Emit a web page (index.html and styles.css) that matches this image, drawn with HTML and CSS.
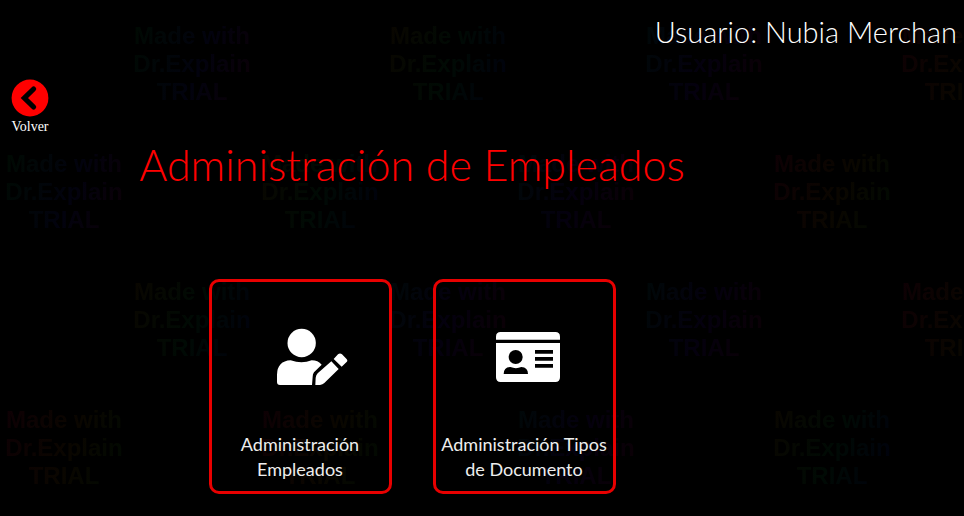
FILE: index.html
```html
<!DOCTYPE html>
<html lang="es">
<head>
<meta charset="utf-8">
<meta name="viewport" content="width=device-width, initial-scale=1">
<title>Administración de Empleados</title>
<link rel="stylesheet" href="styles.css">
</head>
<body>
<div class="marks" aria-hidden="true">
  <div class="marks-row marks-row-shifted">
    <p class="mark green">Made with<br>Dr.Explain<br>TRIAL</p>
    <p class="mark olive">Made with<br>Dr.Explain<br>TRIAL</p>
    <p class="mark teal">Made with<br>Dr.Explain<br>TRIAL</p>
    <p class="mark red">Made with<br>Dr.Explain<br>TRIAL</p>
  </div>
  <div class="marks-row">
    <p class="mark green">Made with<br>Dr.Explain<br>TRIAL</p>
    <p class="mark olive">Made with<br>Dr.Explain<br>TRIAL</p>
    <p class="mark teal">Made with<br>Dr.Explain<br>TRIAL</p>
    <p class="mark red">Made with<br>Dr.Explain<br>TRIAL</p>
  </div>
  <div class="marks-row marks-row-shifted">
    <p class="mark olive">Made with<br>Dr.Explain<br>TRIAL</p>
    <p class="mark teal">Made with<br>Dr.Explain<br>TRIAL</p>
    <p class="mark teal">Made with<br>Dr.Explain<br>TRIAL</p>
    <p class="mark red">Made with<br>Dr.Explain<br>TRIAL</p>
  </div>
  <div class="marks-row">
    <p class="mark red">Made with<br>Dr.Explain<br>TRIAL</p>
    <p class="mark red">Made with<br>Dr.Explain<br>TRIAL</p>
    <p class="mark teal">Made with<br>Dr.Explain<br>TRIAL</p>
    <p class="mark olive">Made with<br>Dr.Explain<br>TRIAL</p>
  </div>
</div>
<div class="page">
  <header class="user">Usuario: Nubia Merchan</header>
  <nav class="nav">
    <a class="back" href="#">
      <svg class="back-icon" viewBox="0 0 38 38" aria-hidden="true">
        <circle cx="19" cy="19" r="18.4" fill="#ff0000"/>
        <path d="M22.6 10 13.4 19l9.2 9" fill="none" stroke="#000" stroke-width="5.2" stroke-linecap="round" stroke-linejoin="miter"/>
      </svg>
      <span>Volver</span>
    </a>
  </nav>
  <main class="main">
    <h1 class="title">Administración de Empleados</h1>
    <div class="cards">
      <a class="card" href="#">
        <svg class="icon icon-user" viewBox="20 24 216 174" fill="#fff" aria-hidden="true">
          <circle cx="97" cy="69" r="42.5"/>
          <path d="M23 186v-22q1-41 41-43 33 12 63 0 19 0 30 13l-23 23q-4 5-4 13l-2 25H32q-9 0-9-9z"/>
          <path d="M138 195l1-22q1-8 6-13l41-36 22 23-43 42q-5 5-13 6z"/>
          <path d="M193 117l13-14q6-5 12 0l13 13q6 6 0 11l-14 13z"/>
        </svg>
        <span class="label">Administración Empleados</span>
      </a>
      <a class="card" href="#">
        <svg class="icon icon-id" viewBox="33 36 192 150" aria-hidden="true">
          <path d="M33 59V50q0-14 14-14h164q14 0 14 14v9zM33 69h192v103q0 14-14 14H47q-14 0-14-14z" fill="#fff"/>
          <circle cx="92" cy="111" r="21"/>
          <path d="M56 162q0-20 20-21 17 7 33 0 20 1 20 21zM150 90h54v11h-54zM150 111h54v11h-54zM150 132h54v11h-54z"/>
        </svg>
        <span class="label">Administración Tipos de Documento</span>
      </a>
    </div>
  </main>
</div>
</body>
</html>
```
FILE: styles.css
```css
* {
  box-sizing: border-box;
}

body {
  margin: 0;
  background: #000;
  color: #fff;
  font-family: "Century Gothic", Lato, sans-serif;
}

a {
  color: inherit;
  text-decoration: none;
}

.page {
  position: relative;
  padding: 11px 7px 22px;
}

/* Watermark layer behind the page */
.marks {
  position: absolute;
  inset: 0;
  overflow: hidden;
  padding-top: 22px;
}

.marks-row {
  display: flex;
  gap: 136px;
  height: 128px;
  padding-left: 4px;
}

.marks-row-shifted {
  padding-left: 132px;
}

.mark {
  flex: none;
  width: 120px;
  height: 86px;
  margin: 0;
  font: bold 24px/28px "Liberation Sans", sans-serif;
  text-align: center;
  white-space: nowrap;
  color: transparent;
  background-clip: text;
  -webkit-background-clip: text;
}

.green {
  background-image: linear-gradient(110deg, #000a02, #02020e 55%, #0c0006);
}

.olive {
  background-image: linear-gradient(110deg, #0a0600, #000a04 50%, #00000e);
}

.teal {
  background-image: linear-gradient(110deg, #000808, #04000e 50%, #0c0004);
}

.red {
  background-image: linear-gradient(110deg, #0e0004, #0a0600 55%, #000a02);
}

.user {
  font-size: 29px;
  font-weight: 300;
  line-height: 42px;
  text-align: right;
}

.nav {
  display: flex;
  margin-top: 26px;
}

.back {
  display: flex;
  flex-direction: column;
  align-items: center;
  padding-left: 4px;
  font: 14px/20px "Liberation Serif", serif;
}

.back-icon {
  width: 38px;
  height: 38px;
}

.main {
  padding: 2px 140px 0 0;
}

.title {
  margin: 0 0 88px;
  color: #f00;
  font-size: 43px;
  font-weight: 300;
  line-height: 52px;
  text-align: center;
}

.cards {
  display: flex;
  justify-content: center;
  gap: 41px;
}

.card {
  display: flex;
  flex-direction: column;
  align-items: center;
  width: 183px;
  min-height: 215px;
  padding: 46px 2px 9px;
  border: 3px solid #e80000;
  border-radius: 10px;
}

.icon {
  height: 58px;
}

.icon-user {
  width: 72px;
  margin-left: 24px;
}

.icon-id {
  width: 64px;
  padding: 4px 0;
  margin-left: 8px;
}

.label {
  margin-top: auto;
  padding: 0 2px;
  color: #eee;
  font-size: 18px;
  line-height: 25px;
  text-align: center;
}
```
